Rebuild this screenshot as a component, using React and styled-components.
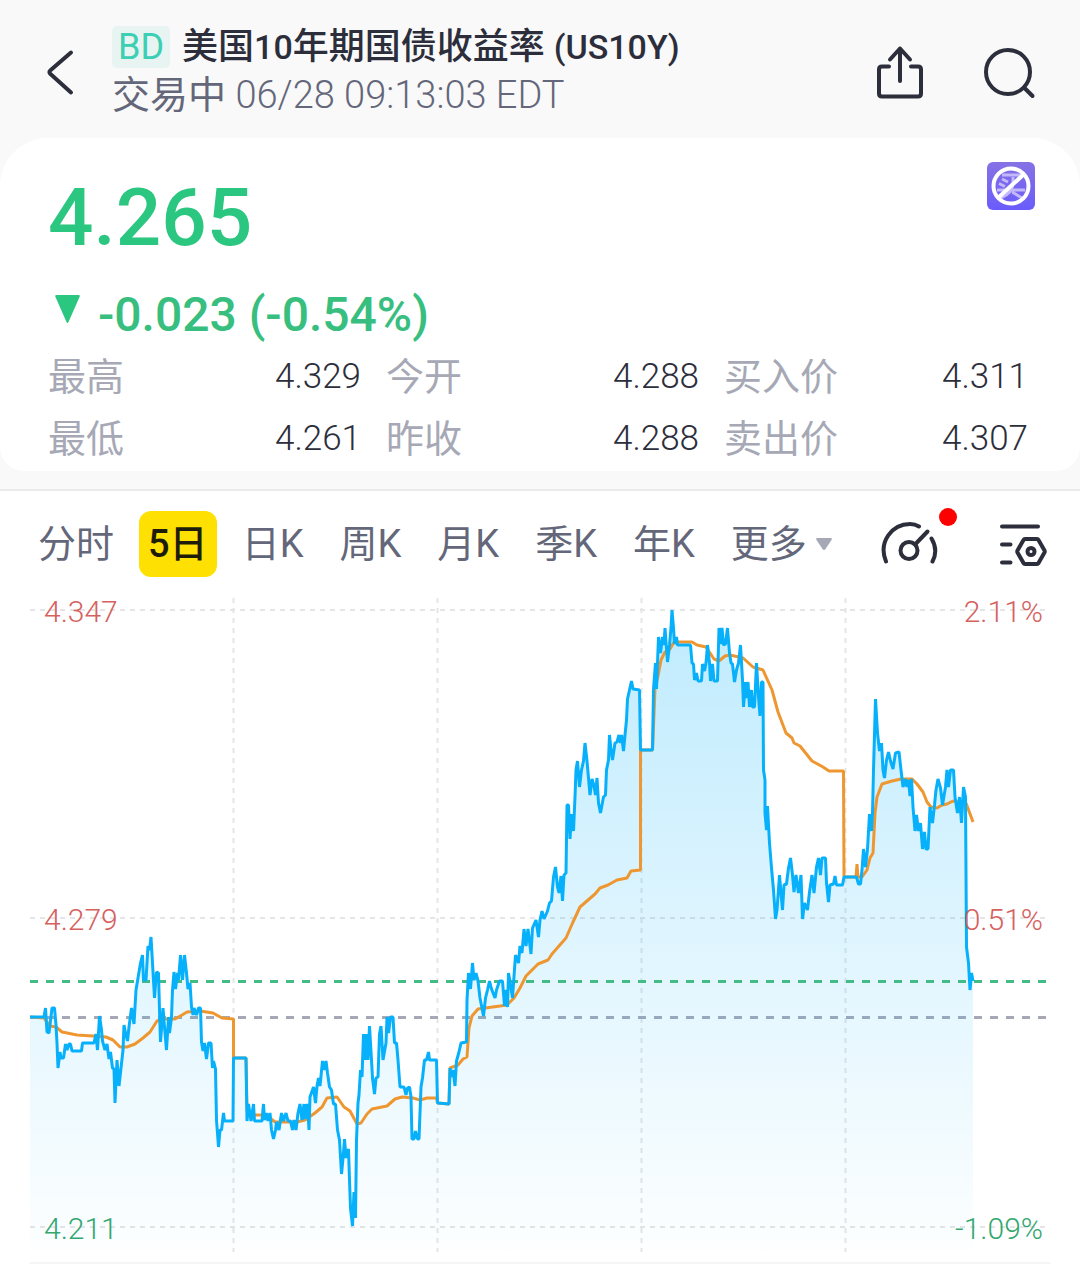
import React, { useState } from "react";
import styled, { createGlobalStyle } from "styled-components";

const GlobalStyle = createGlobalStyle`
  * {
    box-sizing: border-box;
  }

  body {
    margin: 0;
    background: #ffffff;
    color: #2c2e3b;
    font-family: Roboto, "Noto Sans CJK SC", sans-serif;
  }

  button {
    border: 0;
    padding: 0;
    background: none;
    color: inherit;
    font: inherit;
    cursor: pointer;
  }
`;

const Top = styled.div`
  background: #f9f9f9;
  padding-bottom: 18px;
`;

const Header = styled.header`
  display: flex;
  align-items: center;
  padding: 24px 44px 18px 46px;
`;

const IconButton = styled.button`
  position: relative;
  display: block;
  flex: none;

  svg {
    display: block;
    fill: none;
    stroke: #2c2e3b;
    stroke-width: 4;
    stroke-linecap: round;
    stroke-linejoin: round;
  }
`;

const Heading = styled.div`
  flex: 1;
  margin-left: 38px;
  white-space: nowrap;
`;

const TitleRow = styled.div`
  display: flex;
  align-items: center;
  gap: 12px;
  height: 46px;
`;

const Market = styled.span`
  padding: 0 6px;
  border-radius: 5px;
  background: #e8f4f1;
  color: #3ccfb3;
  font-size: 36px;
  line-height: 42px;
`;

const Title = styled.h1`
  margin: 0;
  font-size: 36px;
  font-weight: 500;
  line-height: 46px;
`;

const Latin = styled.span`
  font-size: 34px;
`;

const Status = styled.p`
  height: 50px;
  margin: 0;
  color: #646779;
  font-size: 38px;
  line-height: 50px;

  span {
    font-size: 38px;
    font-weight: 300;
  }
`;

const HeaderActions = styled.div`
  display: flex;
  align-items: center;
  gap: 60px;
`;

const Quote = styled.section`
  position: relative;
  padding: 40px 52px 1px 48px;
  border-radius: 48px 48px 24px 24px;
  background: #ffffff;
`;

const TradeBadge = styled.button`
  position: absolute;
  top: 24px;
  right: 45px;

  svg {
    display: block;
  }
`;

const Price = styled.div`
  color: #2bc680;
  font-size: 80px;
  font-weight: 500;
  line-height: 80px;
`;

const Change = styled.div`
  display: flex;
  align-items: center;
  gap: 16px;
  margin-top: 26px;
  padding-left: 6px;
  color: #38bf80;
  font-size: 48px;
  font-weight: 500;
  line-height: 62px;

  svg {
    margin-bottom: 12px;
  }
`;

const Stats = styled.dl`
  display: grid;
  grid-template-columns: 313fr 313fr 304fr;
  column-gap: 25px;
  margin: 0;
`;

const Stat = styled.div`
  display: flex;
  justify-content: space-between;
  line-height: 62px;

  dt {
    color: #a6a9b5;
    font-size: 38px;
  }

  dd {
    margin: 0;
    font-size: 35px;
    font-weight: 300;
  }
`;

const ChartSection = styled.section`
  border-top: 2px solid #ebebeb;
  padding-top: 20px;
`;

const Toolbar = styled.div`
  display: flex;
  align-items: center;
  justify-content: space-between;
  padding: 0 32px 0 27px;
`;

const Tabs = styled.div`
  display: flex;
  gap: 14px;
`;

const Tab = styled.button`
  display: flex;
  align-items: center;
  gap: 9px;
  height: 66px;
  padding: 0 ${({ $active }) => ($active ? 9 : 11)}px;
  border-radius: 12px;
  background: ${({ $active }) => ($active ? "#fee102" : "transparent")};
  color: ${({ $active }) => ($active ? "#1d1c08" : "#646779")};
  font-size: 38px;
  font-weight: ${({ $active }) => ($active ? 500 : 400)};
  line-height: 66px;
  white-space: nowrap;
`;

const ToolbarActions = styled.div`
  display: flex;
  gap: 60px;
`;

const Dot = styled.span`
  position: absolute;
  top: -12px;
  right: -18px;
  width: 18px;
  height: 18px;
  border-radius: 50%;
  background: #ff0000;
`;

const ChartSvg = styled.svg`
  display: block;
  width: 100%;
  height: auto;
  margin-top: 13px;
`;

const AxisLabel = styled.text`
  fill: ${({ $down }) => ($down ? "#34a770" : "#d5615f")};
  font-size: 30px;
  font-weight: 300;
`;

const stats = [
  { label: "最高", value: "4.329" },
  { label: "今开", value: "4.288" },
  { label: "买入价", value: "4.311" },
  { label: "最低", value: "4.261" },
  { label: "昨收", value: "4.288" },
  { label: "卖出价", value: "4.307" },
];

const periods = ["分时", "5日", "日K", "周K", "月K", "季K", "年K", "更多"];

const axisRows = [
  { y: 610, price: "4.347", percent: "2.11%" },
  { y: 918, price: "4.279", percent: "0.51%" },
  { y: 1227, price: "4.211", percent: "-1.09%", down: true },
];

const dayLines = [233, 437, 641, 845];

// one string for each trading day, x,y pairs
const priceLine = [
  `30,1017 44,1017 45.5,1008 47,1032 49,1033 52,1008 54.5,1008 56,1025 57,1043 58,1068
  60,1052 61,1058 63.5,1058 65.5,1044 67,1050 69,1044 70.5,1044 72,1051 81.5,1051 82.5,1043
  94,1043 96,1034 97.5,1050 99.5,1016 101.5,1030 102.5,1041 105,1050 107,1044 109,1059
  110.5,1052 112.5,1068 114,1069 115,1103 117,1060 119,1086 121,1068 123,1050 124,1025
  125.5,1033 127.5,1041 129,1027 131.5,1008 134,1024 136,990 137.5,981 139,972 140.5,963
  142.5,955 143.5,980 146,980 148,946 149.5,950 151,937 152.5,963 154.5,998 156.5,972
  158.5,973 159.5,1010 160.5,1042 163,1008 164.5,1027 166.5,1050 168.5,1017 169.5,1033
  171.5,1017 172.5,990 174,972 175.5,989 177.5,973 178.5,980 180.5,955 182.5,980 184.5,955
  186.5,973 188,989 190,983 191.5,1007 193,1015 194,1008 196.5,1015 198.5,1008 200.5,1008
  201.5,1042 203,1051 204.5,1043 206.5,1059 208.5,1043 211,1043 212.5,1068 213.5,1061
  215.5,1069 216.5,1120 218.5,1147 220,1130 221.5,1130 223.5,1113 224.5,1121 233,1121`,
  `233.5,1058 246,1058 247,1121 248.5,1104 251,1121 253.5,1104 254.5,1121 262,1121 263.5,1104
  264.5,1120 266.5,1113 268,1121 270,1113 271.5,1130 273.5,1139 275.5,1130 276.5,1122
  279,1130 281.5,1113 283.5,1121 286,1113 288,1121 290.5,1121 292.5,1130 294,1120 296,1130
  298,1113 300,1104 302,1120 304,1104 305,1119 307,1104 308,1113 309,1130 310,1097 313.5,1087
  315.5,1103 317,1086 318.5,1078 320,1086 322.5,1061 324,1070 326,1061 327.5,1073 329.5,1087
  331.5,1090 333.5,1104 335.5,1104 337.5,1130 339.5,1140 341.5,1174 343.5,1153 344.5,1139
  346,1158 348.5,1149 349.5,1180 350.5,1208 352.5,1226 354,1192 355.5,1218 356.5,1140
  358,1103 359,1095 360.5,1070 362,1077 363.5,1034 365,1060 366.5,1034 368,1060 369.5,1026
  371.5,1060 372.5,1078 374.5,1094 376,1078 378,1077 379.5,1034 381,1026 383,1060 386,1043
  387,1017 388.5,1033 390.5,1017 393,1017 394.5,1043 396.5,1043 398,1060 400,1087 404,1087
  406,1095 407.5,1088 409.5,1087 411,1097 412,1139 414,1139 415.5,1131 417.5,1139 419,1139
  421,1087 422.5,1078 424.5,1060 426.5,1060 428.5,1052 429.5,1060 436.5,1060`,
  `437.5,1103 449,1104 450,1068 452,1077 453,1070 455,1086 456.5,1061 459,1052 461,1043
  466.5,1042 467,1000 468.5,973 470.5,989 472.5,963 474,980 476,973 478,981 480,998
  483.5,1016 485.5,998 487.5,990 489.5,981 491.5,989 495,998 496.5,990 499.5,981 502.5,981
  504.5,1006 506,990 507.5,1007 508.5,973 510.5,985 512.5,998 515.5,955 518.5,963 520,946
  522,953 524,929 526,946 528,929 531,954 532.5,928 536,920 538.5,937 540,920 542,911
  544,919 547.5,911 549.5,903 551.5,901 553.5,877 555.5,867 557.5,887 559,893 561,876
  562.5,901 564,875 566,873 567,805 568.5,805 570,839 571.5,814 573.5,831 575,797 576,770
  577.5,761 579.5,787 581.5,770 583.5,761 585,743 587,761 588.5,778 590,795 592,779
  594,786 595.5,795 597,778 598.5,803 600.5,813 603.5,797 605.5,795 606.5,770 608.5,760
  609.5,735 611,750 612.5,760 615,743 617,742 619,735 620.5,743 621.5,735 623.5,751 625,735
  626.5,720 627.5,699 629.5,690 631.5,681 633,689 639.5,690`,
  `640.5,750 652.5,750 653.5,689 655.5,663 656.5,689 658.5,637 660.5,653 662.5,637 664,645
  665,628 667.5,662 669.5,645 671,628 672,610 673.5,628 674.5,644 676.5,637 677.5,645
  690.5,645 692,663 693.5,664 694.5,680 696.5,673 698,681 701.5,681 702.5,664 704.5,671
  706,663 707.5,645 709.5,663 710.5,681 712.5,664 714,681 717.5,681 719,628 720.5,644
  722,628 723.5,645 725.5,644 727.5,628 729.5,653 731,663 732.5,664 734.5,682 736.5,670
  738.5,663 740.5,645 742.5,680 743.5,707 745.5,682 746.5,698 748,682 749.5,707 751.5,690
  752.5,707 754.5,707 756.5,663 758.5,697 760,716 761.5,682 763,682 763.5,770 765,780
  765,813 766.5,830 767.5,806 769.5,843 771.5,868 773.5,890 775.5,919 777,910 779.5,875
  781,893 782.5,910 784,885 786.5,884 788.5,868 790.5,858 792.5,875 794,892 796,875
  798.5,893 801,875 802.5,919 804.5,903 807.5,910 809.5,892 812,875 814,893 816.5,867
  818.5,858 820.5,875 822,858 825.5,858 826.5,883 828.5,902 830,885 833.5,884 835,876
  836.5,885 842.5,885`,
  `844,877 856.5,877 858.5,884 860.5,884 862,870 863.5,849 865.5,867 867.5,849 869.5,814
  871.5,831 872.5,813 873.5,770 875.5,699 877.5,733 879.5,751 881.5,743 883,770 884.5,778
  886.5,760 888.5,752 890.5,761 893,769 895.5,753 899,752 901,770 903,787 905.5,779 907,787
  908.5,780 910,796 911.5,779 913,807 915,831 916.5,815 918.5,831 920.5,823 922.5,849
  924.5,832 926,849 928,849 930,807 932.5,823 934.5,805 936,790 938,779 940.5,788 942.5,805
  945.5,787 947,770 948.5,787 950.5,770 953.5,770 955,797 957.5,813 959.5,797 961.5,823
  963.5,787 965.5,797 966.5,947 968.5,963 970,990 971.5,973 973,981`,
].join(" ");

const averageLine = [
  `30,1017 44,1018 50,1026 56,1027 62,1032 77,1035 93,1036 106,1037 113,1040 120,1047 127,1047
  135,1044 143,1038 150,1032 157,1021 163,1019 175,1019 182,1015 187,1012 200,1011 213,1013
  222,1018 233.5,1019`,
  `233.5,1058 246,1058 247,1110 249,1115 262,1115 270,1118 275,1122 297,1122 305,1120 315,1113
  322,1107 327,1098 337,1097 344,1107 350,1111 357,1124 361,1123 367,1114 372,1109 387,1106
  395,1099 402,1097 413,1098 420,1100 427,1098 436.5,1098`,
  `437.5,1103 449,1104 450,1068 458,1065 463,1059 467,1057 469,1028 472,1016 478,1009 500,1006
  507,1005 514,998 520,988 526,976 538,964 548,960 552,954 566,938 573,922 580,907 595,894
  600,888 608,885 617,880 627,878 631,871 640.5,870`,
  `640.5,750 652.5,750 655,689 658,676 661,660 665,652 670,649 674,642 692,642 697,645 706,647
  710,653 714,659 719,661 725,656 730,655 743,658 753,667 763,670 772,690 778,712 786,733
  792,738 794,743 800,746 812,761 823,767 829,771 843.5,771`,
  `844,877 856,877 857,864 858,877 862,877 867,870 870,858 873,853 875,813 877,797 882,784
  892,781 901,779 912,779 917,784 923,792 927,802 931,807 937,808 942,805 947,804 953,801
  966,803 973,822`,
].join(" ");

const PriceChart = () => (
  <ChartSvg viewBox="0 590 1080 683" role="img" aria-label="5日">
    <defs>
      <linearGradient
        id="area"
        gradientUnits="userSpaceOnUse"
        x1="0"
        y1="610"
        x2="0"
        y2="1250"
      >
        <stop offset="0" stopColor="#00b0fb" stopOpacity="0.25" />
        <stop offset="1" stopColor="#00b0fb" stopOpacity="0.01" />
      </linearGradient>
    </defs>
    <g stroke="#e5e5e7" strokeWidth="2" strokeDasharray="5 5">
      {axisRows.map(({ y }) => (
        <line key={y} x1="30" x2="1050" y1={y} y2={y} />
      ))}
      {dayLines.map((x) => (
        <line key={x} x1={x + 0.5} x2={x + 0.5} y1="598" y2="1252" />
      ))}
    </g>
    <line x1="30" x2="1050" y1="1263" y2="1263" stroke="#ebebeb" />
    <line
      x1="30"
      x2="1046"
      y1="1017.5"
      y2="1017.5"
      stroke="#a6a9b5"
      strokeWidth="3"
      strokeDasharray="8 8"
    />
    <polygon points={`30,1250 ${priceLine} 973,1250`} fill="url(#area)" />
    <line
      x1="30"
      x2="1046"
      y1="981.5"
      y2="981.5"
      stroke="#42bb84"
      strokeWidth="3"
      strokeDasharray="8 8"
    />
    <g fill="none" strokeWidth="3" strokeLinejoin="bevel">
      <polyline points={averageLine} stroke="#ee9730" />
      <polyline points={priceLine} stroke="#07b0fb" />
    </g>
    {axisRows.map(({ y, price, percent, down }) => (
      <g key={y}>
        <AxisLabel x="44" y={y + 12} $down={down}>
          {price}
        </AxisLabel>
        <AxisLabel x="1043" y={y + 12} textAnchor="end" $down={down}>
          {percent}
        </AxisLabel>
      </g>
    ))}
  </ChartSvg>
);

const App = () => {
  const [period, setPeriod] = useState("5日");

  return (
    <>
      <GlobalStyle />
      <Top>
        <Header>
          <IconButton type="button" aria-label="返回">
            <svg width="28" height="48" viewBox="0 0 28 48">
              <path d="M25 4.5 4.2 22.6Q2.8 24 4.2 25.8L25 44.5" />
            </svg>
          </IconButton>
          <Heading>
            <TitleRow>
              <Market>BD</Market>
              <Title>
                美国<Latin>10</Latin>年期国债收益率 <Latin>(US10Y)</Latin>
              </Title>
            </TitleRow>
            <Status>
              交易中 <span>06/28 09:13:03 EDT</span>
            </Status>
          </Heading>
          <HeaderActions>
            <IconButton type="button" aria-label="分享">
              <svg width="48" height="56" viewBox="0 0 48 56">
                <path d="M24 4.5V37M14 15.5 24 4.5 34 15.5" />
                <path d="M13 22.5H6Q3 22.5 3 25.5V49.5Q3 52.5 6 52.5H42Q45 52.5 45 49.5V25.5Q45 22.5 42 22.5H35" />
              </svg>
            </IconButton>
            <IconButton type="button" aria-label="搜索">
              <svg width="52" height="56" viewBox="0 0 52 56">
                <circle cx="24" cy="28" r="22" />
                <path d="M40.5 44 48.5 52" />
              </svg>
            </IconButton>
          </HeaderActions>
        </Header>

        <Quote>
          <TradeBadge type="button" aria-label="不可卖空">
            <svg width="48" height="48" viewBox="0 0 48 48" fill="none">
              <defs>
                <linearGradient id="badge" x1="0" y1="0" x2="0" y2="1">
                  <stop offset="0" stopColor="#8672e4" />
                  <stop offset="1" stopColor="#6a5cfb" />
                </linearGradient>
              </defs>
              <rect width="48" height="48" rx="6" fill="url(#badge)" />
              <g stroke="#c3b8fb" strokeWidth="3">
                <path d="M15 13H33L31 18" />
                <path d="M15 17 21 20M12 21.5 18 24.5" />
                <path d="M26 15V22Q25 31 14 36" />
                <path d="M10 28H38M25 30 35 36" />
              </g>
              <g stroke="#ffffff" strokeWidth="4">
                <circle cx="24" cy="24" r="17.5" />
                <path d="M12 35 36 13" />
              </g>
            </svg>
          </TradeBadge>
          <Price>4.265</Price>
          <Change>
            <svg width="28" height="30" viewBox="0 0 28 30">
              <path
                d="M2.5 1H24.5Q26.5 1 25.5 3L14.5 28Q13.5 30 12.5 28L1.5 3Q.5 1 2.5 1Z"
                fill="#2bc680"
              />
            </svg>
            -0.023 (-0.54%)
          </Change>
          <Stats>
            {stats.map(({ label, value }) => (
              <Stat key={label}>
                <dt>{label}</dt>
                <dd>{value}</dd>
              </Stat>
            ))}
          </Stats>
        </Quote>
      </Top>

      <ChartSection>
        <Toolbar>
          <Tabs>
            {periods.map((name) => (
              <Tab
                key={name}
                type="button"
                $active={name === period}
                onClick={() => setPeriod(name)}
              >
                {name}
                {name === "更多" && (
                  <svg width="16" height="12" viewBox="0 0 16 12">
                    <path
                      d="M1.5 0H14.5Q16.5 0 15.5 2L9.5 11Q8 13 6.5 11L.5 2Q-.5 0 1.5 0Z"
                      fill="#a6a9b5"
                    />
                  </svg>
                )}
              </Tab>
            ))}
          </Tabs>
          <ToolbarActions>
            <IconButton type="button" aria-label="指标">
              <svg width="60" height="48" viewBox="0 0 60 48">
                <path d="M7 41.5C-1 22 13 4 31 4Q36 4 40 6.5" />
                <path d="M52.5 18.5Q59.5 30 53.5 41.5" />
                <circle cx="30" cy="30.5" r="8.5" />
                <path d="M36.5 24 48.5 11.5" />
              </svg>
              <Dot />
            </IconButton>
            <IconButton type="button" aria-label="设置">
              <svg width="49" height="48" viewBox="0 0 49 48">
                <path d="M3 6.5H39M3 24.5H11.5M3 42.5H11.5" />
                <path d="M26 19H38Q39 19 39.5 20L45.5 30.5Q46 31.5 45.5 32.5L39.5 43Q39 44 38 44H26Q25 44 24.5 43L18.5 32.5Q18 31.5 18.5 30.5L24.5 20Q25 19 26 19Z" />
                <circle cx="32" cy="31.5" r="3.5" />
              </svg>
            </IconButton>
          </ToolbarActions>
        </Toolbar>
        <PriceChart />
      </ChartSection>
    </>
  );
};

export default App;
